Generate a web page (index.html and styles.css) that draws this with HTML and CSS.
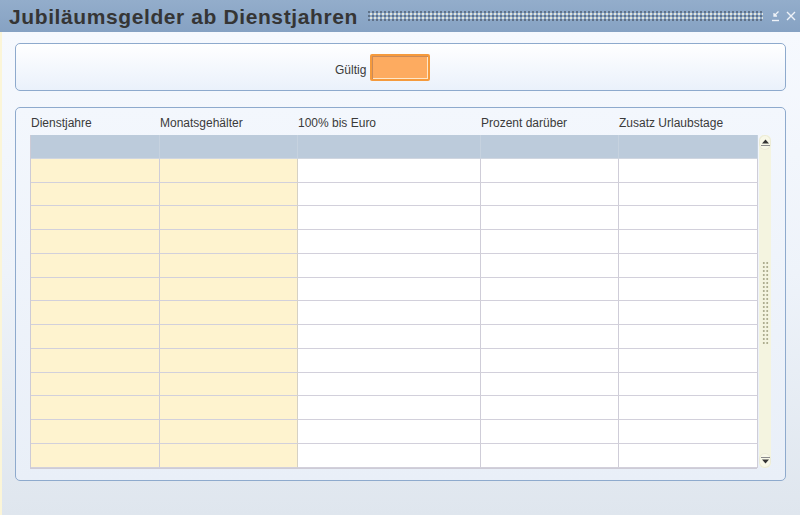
FILE: index.html
```html
<!DOCTYPE html>
<html lang="de">
<head>
<meta charset="utf-8">
<title>Jubiläumsgelder ab Dienstjahren</title>
<link rel="stylesheet" href="styles.css">
</head>
<body>
<div class="window">
  <div class="titlebar">
    <h1 class="title">Jubiläumsgelder ab Dienstjahren</h1>
    <div class="dots"></div>
    <div class="tb-icons">
      <svg class="tb-icon" width="12" height="12" viewBox="0 0 12 12"><path d="M3 10.5h7" stroke="#eef2f8" stroke-width="1.4"/><path d="M9.5 1.5L5 6M5 3v3h3" stroke="#eef2f8" stroke-width="1.3" fill="none"/></svg>
      <svg class="tb-icon" width="12" height="12" viewBox="0 0 12 12"><path d="M2 2l8 8M10 2l-8 8" stroke="#eef2f8" stroke-width="1.4"/></svg>
    </div>
  </div>
  <div class="content">
    <div class="panel panel-top">
      <label class="field-label">Gültig</label>
      <div class="field-input"></div>
    </div>
    <div class="panel panel-table">
      <div class="headers">
        <span class="h h1">Dienstjahre</span>
        <span class="h h2">Monatsgehälter</span>
        <span class="h h3">100% bis Euro</span>
        <span class="h h4">Prozent darüber</span>
        <span class="h h5">Zusatz Urlaubstage</span>
      </div>
      <div class="table-area">
        <div class="grid" id="grid"></div>
        <div class="scrollbar">
          <div class="sb-btn sb-up"><svg width="7" height="5" viewBox="0 0 7 5"><path d="M0 4.5L3.5 0.5L7 4.5Z" fill="#333"/></svg><span class="sb-line"></span></div>
          <div class="sb-track"><div class="sb-grip"></div></div>
          <div class="sb-btn sb-down"><span class="sb-line"></span><svg width="7" height="5" viewBox="0 0 7 5"><path d="M0 0.5L3.5 4.5L7 0.5Z" fill="#333"/></svg></div>
        </div>
      </div>
    </div>
  </div>
</div>
<script>
(function(){
  var g=document.getElementById('grid');
  var html='';
  for(var r=0;r<14;r++){
    for(var c=0;c<5;c++){
      var cls='cell c'+c+(r===0?' hdr':'');
      html+='<div class="'+cls+'"></div>';
    }
  }
  g.innerHTML=html;
})();
</script>
</body>
</html>
```
FILE: styles.css
```css
html, body {
  margin: 0;
  padding: 0;
}
body {
  width: 800px;
  height: 515px;
  overflow: hidden;
  font-family: "Liberation Sans", Arial, sans-serif;
}
.window {
  width: 800px;
  height: 515px;
  display: flex;
  flex-direction: column;
}
.titlebar {
  height: 32px;
  flex: none;
  background: linear-gradient(#93adcb, #86a2c3);
  display: flex;
  align-items: center;
  padding-left: 9px;
  box-sizing: border-box;
}
.title {
  margin: 0;
  font-family: "Liberation Sans", Arial, sans-serif;
  font-weight: bold;
  font-size: 21px;
  color: #353535;
  letter-spacing: 0.6px;
  white-space: nowrap;
  padding-top: 1px;
}
.dots {
  flex: 1;
  height: 10px;
  margin: 0 6px 0 10px;
  background-image:
    radial-gradient(circle at 1px 1px, #56667a 0.65px, transparent 1px),
    radial-gradient(circle at 3px 3px, #f2f0de 0.65px, transparent 1px);
  background-size: 4px 4px;
}
.tb-icons {
  display: flex;
  gap: 4px;
  padding-right: 3px;
}
.tb-icon { display: block; }
.content {
  flex: 1;
  background: linear-gradient(#f6f9fe 0%, #eef3fa 50%, #dfe6ee 100%);
  padding: 11px 14px 0 13px;
  display: flex;
  flex-direction: column;
  gap: 16px;
  border-left: 2px solid #fbf5d8;
}
.panel {
  border: 1px solid #8eaacd;
  border-radius: 5px;
  box-sizing: border-box;
  background: linear-gradient(#ffffff, #eaf1fb);
}
.panel-top {
  height: 48px;
  display: flex;
  align-items: center;
  padding-left: 319px;
}
.field-label {
  font-size: 12px;
  color: #3a3a3a;
  margin-right: 4px;
  margin-top: 6px;
}
.field-input {
  width: 60px;
  height: 27px;
  box-sizing: border-box;
  background: #fdab60;
  border: 2px solid #f59a3c;
  box-shadow: inset 1px 1px 0 #c98a5a, inset -1px -1px 0 #fde6c8;
  border-radius: 2px;
}
.panel-table {
  height: 374px;
  background: linear-gradient(#f3f7fd, #e9eff8);
  padding: 0 14px 0 14px;
}
.headers {
  height: 27px;
  display: grid;
  grid-template-columns: 129px 138px 183px 138px 138px;
  align-items: center;
  font-size: 12px;
  color: #3a3a3a;
  padding-top: 2px;
  box-sizing: border-box;
}
.h { padding-left: 1px; }
.table-area {
  display: flex;
  gap: 2px;
}
.grid {
  width: 727px;
  display: grid;
  grid-template-columns: 129px 138px 183px 138px 139px;
  grid-template-rows: repeat(14, 23.78px);
  border-left: 1px solid #cdcbd6;
  border-bottom: 1px solid #cdcbd6;
  box-sizing: border-box;
}
.cell {
  border-right: 1px solid #cfcdd8;
  border-bottom: 1px solid #d2d0db;
  box-sizing: border-box;
  background: #ffffff;
}
.cell.c0, .cell.c1 { background: #fef3cf; }
.cell.c1 { border-right-color: #d6d1c4; }
.cell.hdr {
  background: #bccbdb;
  border-right-color: #c6d2df;
  border-bottom-color: #d0d6e0;
}
.scrollbar {
  width: 13px;
  height: 333px;
  display: flex;
  flex-direction: column;
  background: #f4f4e0;
  border-radius: 5px;
}
.sb-btn {
  height: 15px;
  flex: none;
  display: flex;
  flex-direction: column;
  align-items: center;
  justify-content: center;
  gap: 1px;
  background: #f8f8e8;
  border-radius: 6px;
  box-shadow: 0 0 0 1px #ecebd6 inset;
}
.sb-line {
  width: 9px;
  height: 1px;
  background: #8c8c8c;
}
.sb-track {
  flex: 1;
  display: flex;
  align-items: center;
  justify-content: center;
}
.sb-grip {
  width: 7px;
  height: 84px;
  margin-top: 2px;
  background-image: radial-gradient(circle, #aeae90 0.8px, transparent 1.2px);
  background-size: 3.5px 4px;
}
```
